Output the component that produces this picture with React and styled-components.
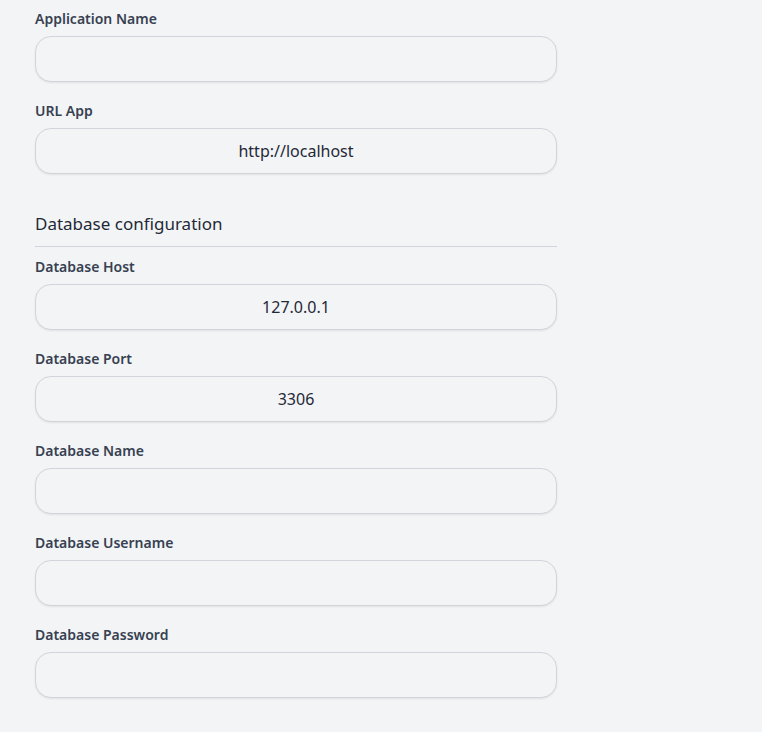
import React from "react";
import styled, { createGlobalStyle } from "styled-components";

const Global = createGlobalStyle`
  body {
    margin: 0;
    background: #f3f4f6;
    font-family: "Noto Sans", "Open Sans", sans-serif;
  }
`;

const Form = styled.form`
  width: 522px;
  padding: 9px 35px 0;
`;

const Field = styled.div`
  display: flex;
  flex-direction: column;
  gap: 7px;
  margin-bottom: 19px;
`;

const Label = styled.label`
  font-size: 14px;
  line-height: 20px;
  font-weight: 600;
  color: #374151;
`;

const Input = styled.input`
  box-sizing: border-box;
  height: 46px;
  width: 100%;
  border: 1px solid #d1d5db;
  border-radius: 16px;
  background: #f3f4f6;
  box-shadow: 0 1px 2px rgba(0, 0, 0, 0.08);
  text-align: center;
  font-family: inherit;
  font-size: 16px;
  color: #1f2937;
  outline: none;
`;

const Section = styled.h3`
  margin: 38px 0 10px;
  padding-bottom: 10px;
  font-size: 17px;
  line-height: 24px;
  font-weight: 400;
  color: #1f2937;
  border-bottom: 1px solid #d1d5db;
`;

const Row = ({ label, value }) => (
  <Field>
    <Label>{label}</Label>
    <Input defaultValue={value} />
  </Field>
);

export default function App() {
  return (
    <>
      <Global />
      <Form>
        <Row label="Application Name" value="" />
        <Row label="URL App" value="http://localhost" />
        <Section>Database configuration</Section>
        <Row label="Database Host" value="127.0.0.1" />
        <Row label="Database Port" value="3306" />
        <Row label="Database Name" value="" />
        <Row label="Database Username" value="" />
        <Row label="Database Password" value="" />
      </Form>
    </>
  );
}
